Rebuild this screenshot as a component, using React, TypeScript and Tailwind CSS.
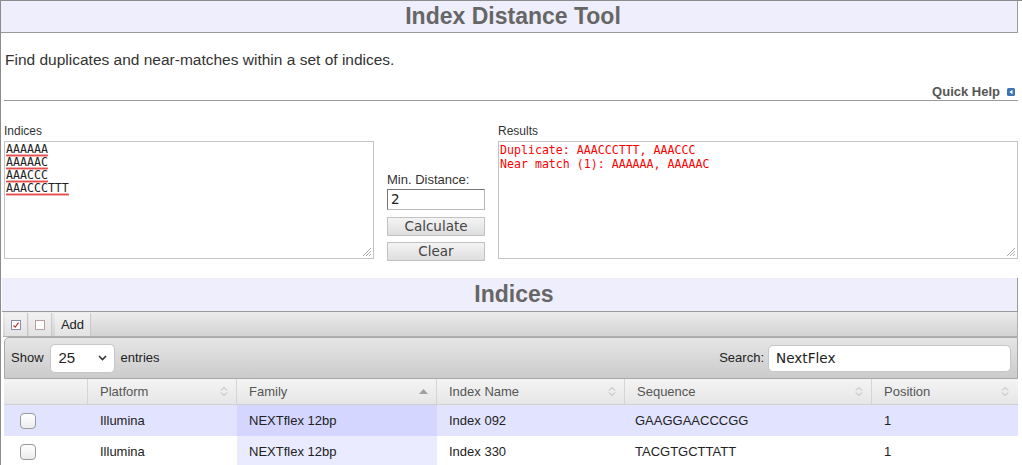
const SortBoth = () => (
  <svg width="8" height="11" viewBox="0 0 8 11" className="shrink-0">
    <path d="M1 4.5 L4 1.5 L7 4.5" fill="none" stroke="#b5b5b5" strokeWidth="1" />
    <path d="M1 6.5 L4 9.5 L7 6.5" fill="none" stroke="#b5b5b5" strokeWidth="1" />
  </svg>
);

const SortAsc = () => (
  <svg width="9" height="5" viewBox="0 0 9 5" className="shrink-0">
    <path d="M0 5 L4.5 0 L9 5 Z" fill="#a0a0a0" />
  </svg>
);

const Grip = () => (
  <svg width="11" height="11" viewBox="0 0 11 11" className="absolute right-[1px] bottom-[1px]">
    <path d="M10 2 L2 10 M10 5 L5 10 M10 8 L8 10" stroke="#aaa" strokeWidth="1" />
  </svg>
);

// red spell-check squiggle under a word
const Squiggle = ({ width }: { width: number }) => {
  let d = "M0 2.5";
  for (let x = 1; x <= width; x++) d += ` L${x} ${x % 2 ? 0.5 : 2.5}`;
  return (
    <svg width={width} height="3" viewBox={`0 0 ${width} 3`} className="absolute left-0 top-[11px]">
      <path d={d} fill="none" stroke="#e02020" strokeWidth="0.8" />
    </svg>
  );
};

const Checkbox = () => (
  <div className="w-[16px] h-[16px] rounded-[4px] border border-[#9a9a9a] bg-gradient-to-b from-white to-[#ececec]" />
);

const columns = [
  { name: "", sort: null },
  { name: "Platform", sort: "both" },
  { name: "Family", sort: "asc" },
  { name: "Index Name", sort: "both" },
  { name: "Sequence", sort: "both" },
  { name: "Position", sort: "both" },
];

const rows = [
  { platform: "Illumina", family: "NEXTflex 12bp", name: "Index 092", seq: "GAAGGAACCCGG", pos: "1" },
  { platform: "Illumina", family: "NEXTflex 12bp", name: "Index 330", seq: "TACGTGCTTATT", pos: "1" },
];

const indices = ["AAAAAA", "AAAAAC", "AAACCC", "AAACCCTTT"];

export default function App() {
  return (
    <div className="w-[1022px] h-[465px] overflow-hidden bg-white border-l border-t border-[#8c8c8c] font-['Liberation_Sans',Arial,sans-serif] text-[#333]">
      <div className="pr-[4px]">
        {/* title bar */}
        <div className="h-[32px] pl-[8px] bg-[#eeeefc] border-b border-r border-[#9a9a9a] flex items-center justify-center">
          <h1 className="text-[23px] font-bold text-[#666] leading-none">Index Distance Tool</h1>
        </div>

        <p className="mt-[18px] pl-[4px] text-[15.5px] leading-[17px]">
          Find duplicates and near-matches within a set of indices.
        </p>

        {/* quick help */}
        <div className="mt-[15px] ml-[3px] h-[17px] border-b border-[#999] flex justify-end items-center gap-[7px] pr-[3px] box-content">
          <span className="text-[13px] font-bold text-[#555]">Quick Help</span>
          <svg width="8" height="8" viewBox="0 0 8 8">
            <rect x="0" y="0" width="8" height="8" rx="1.5" fill="#3c72b6" />
            <path d="M5.5 1.8 L2.3 4 L5.5 6.2 Z" fill="#fff" />
          </svg>
        </div>

        {/* tool form */}
        <div className="mt-[23px] pl-[3px] flex items-start gap-[13px]">
          <div className="w-[370px] flex flex-col">
            <label className="text-[12px] leading-[14px] mb-[3px]">Indices</label>
            <div className="relative h-[118px] border border-[#c4c4c4] px-[1px] pt-[1px] font-['DejaVu_Sans_Mono',monospace] text-[11.6px] leading-[13px] text-[#222]">
              {indices.map((s) => (
                <div key={s} className="relative h-[13px]">
                  <span>{s}</span>
                  <Squiggle width={s.length * 7} />
                </div>
              ))}
              <Grip />
            </div>
          </div>

          <div className="w-[98px] mt-[48px] flex flex-col">
            <label className="text-[13px] leading-[15px] mb-[2px]">Min. Distance:</label>
            <div className="h-[21px] border border-[#b9b9b9] border-t-[#767676] border-l-[#767676] px-[3px] flex items-center font-['DejaVu_Sans',sans-serif] text-[13.5px] text-[#222]">
              2
            </div>
            <button className="mt-[7px] h-[19px] border border-[#c2c2c2] bg-gradient-to-b from-[#f4f4f4] to-[#dedede] font-['DejaVu_Sans',sans-serif] text-[13.5px] leading-none text-[#444]">
              Calculate
            </button>
            <button className="mt-[6px] h-[19px] border border-[#c2c2c2] bg-gradient-to-b from-[#f4f4f4] to-[#dedede] font-['DejaVu_Sans',sans-serif] text-[13.5px] leading-none text-[#444]">
              Clear
            </button>
          </div>

          <div className="flex-1 flex flex-col">
            <label className="text-[12px] leading-[14px] mb-[3px]">Results</label>
            <div className="relative h-[118px] border border-[#c4c4c4] px-[1px] pt-[1px] font-['DejaVu_Sans_Mono',monospace] text-[11.6px] leading-[14px] text-[#f00]">
              <div>Duplicate: AAACCCTTT, AAACCC</div>
              <div>Near match (1): AAAAAA, AAAAAC</div>
              <Grip />
            </div>
          </div>
        </div>

        {/* indices section */}
        <div className="mt-[17px] ml-[1px] pl-[9px] h-[34px] bg-[#eeeefc] border-b border-r border-[#9a9a9a] flex items-center justify-center">
          <h2 className="text-[23px] font-bold text-[#666] leading-none">Indices</h2>
        </div>

        {/* toolbar */}
        <div className="ml-[2px] h-[25px] border-r border-b border-[#b0b0b0] bg-gradient-to-b from-[#ececec] to-[#d2d2d2] flex items-stretch pl-[2px] pt-[1px] gap-[1px]">
          <button className="w-[23px] bg-gradient-to-b from-[#f2f2f2] to-[#e2e2e2] border-r border-[#c8c8c8] flex items-center justify-center">
            <svg width="10" height="10" viewBox="0 0 10 10">
              <rect x="0.5" y="0.5" width="9" height="9" fill="#fff" stroke="#8a8aa8" />
              <path d="M2.5 5.5 L4.2 7.2 L7.6 2.6" fill="none" stroke="#b03a3a" strokeWidth="1.2" />
            </svg>
          </button>
          <button className="w-[23px] bg-gradient-to-b from-[#f2f2f2] to-[#e2e2e2] border-r border-[#c8c8c8] flex items-center justify-center">
            <svg width="10" height="10" viewBox="0 0 10 10">
              <rect x="0.5" y="0.5" width="9" height="9" fill="#fff" stroke="#b8a0a0" />
            </svg>
          </button>
          <button className="ml-[2px] w-[36px] bg-gradient-to-b from-[#f2f2f2] to-[#e2e2e2] border-r border-[#c8c8c8] text-[13px] text-[#222]">
            Add
          </button>
        </div>

        {/* table controls */}
        <div className="ml-[3px] h-[42px] rounded-tl-[5px] border border-[#a8a8a8] bg-gradient-to-b from-[#e6e6e6] to-[#cbcbcb] flex items-center justify-between px-[6px] text-[13px] text-[#222]">
          <div className="flex items-center">
            <span>Show</span>
            <div className="ml-[6px] w-[65px] h-[29px] rounded-[5px] border border-[#c6c6c6] bg-white flex items-center justify-between pl-[8px] pr-[7px]">
              <span className="text-[15px] text-[#222]">25</span>
              <svg width="9" height="6" viewBox="0 0 9 6">
                <path d="M1 1 L4.5 4.5 L8 1" fill="none" stroke="#333" strokeWidth="1.6" />
              </svg>
            </div>
            <span className="ml-[6px]">entries</span>
          </div>
          <div className="flex items-center">
            <span>Search:</span>
            <div className="ml-[4px] w-[243px] h-[27px] rounded-[5px] border border-[#c6c6c6] bg-white flex items-center pl-[7px] font-['DejaVu_Sans',sans-serif] text-[13.6px] text-[#222]">
              NextFlex
            </div>
          </div>
        </div>

        {/* table */}
        <div className="ml-[3px]">
          <div className="grid grid-cols-[84px_149px_200px_188px_247px_145px] h-[26px] bg-gradient-to-b from-[#f4f4f4] to-[#e6e6e6] border-b border-[#d0d0d0] text-[13px] text-[#555]">
            {columns.map((c, i) => (
              <div key={i} className={`flex items-center justify-between pl-[12px] pr-[8px] ${i < columns.length - 1 ? "border-r border-[#d4d4d4]" : ""}`}>
                <span>{c.name}</span>
                {c.sort === "both" && <SortBoth />}
                {c.sort === "asc" && <SortAsc />}
              </div>
            ))}
          </div>
          {rows.map((r, i) => (
            <div key={i} className={`grid grid-cols-[84px_149px_200px_188px_247px_145px] h-[31px] text-[13px] text-[#222] ${i === 0 ? "bg-[#e2e4ff]" : "bg-white"}`}>
              <div className="flex items-center pl-[16px]">
                <Checkbox />
              </div>
              <div className="flex items-center pl-[12px]">{r.platform}</div>
              <div className={`flex items-center pl-[12px] ${i === 0 ? "bg-[#d4d6ff]" : "bg-[#eaebff]"}`}>{r.family}</div>
              <div className="flex items-center pl-[12px]">{r.name}</div>
              <div className="flex items-center pl-[10px]">{r.seq}</div>
              <div className="flex items-center pl-[12px]">{r.pos}</div>
            </div>
          ))}
        </div>
      </div>
    </div>
  );
}
